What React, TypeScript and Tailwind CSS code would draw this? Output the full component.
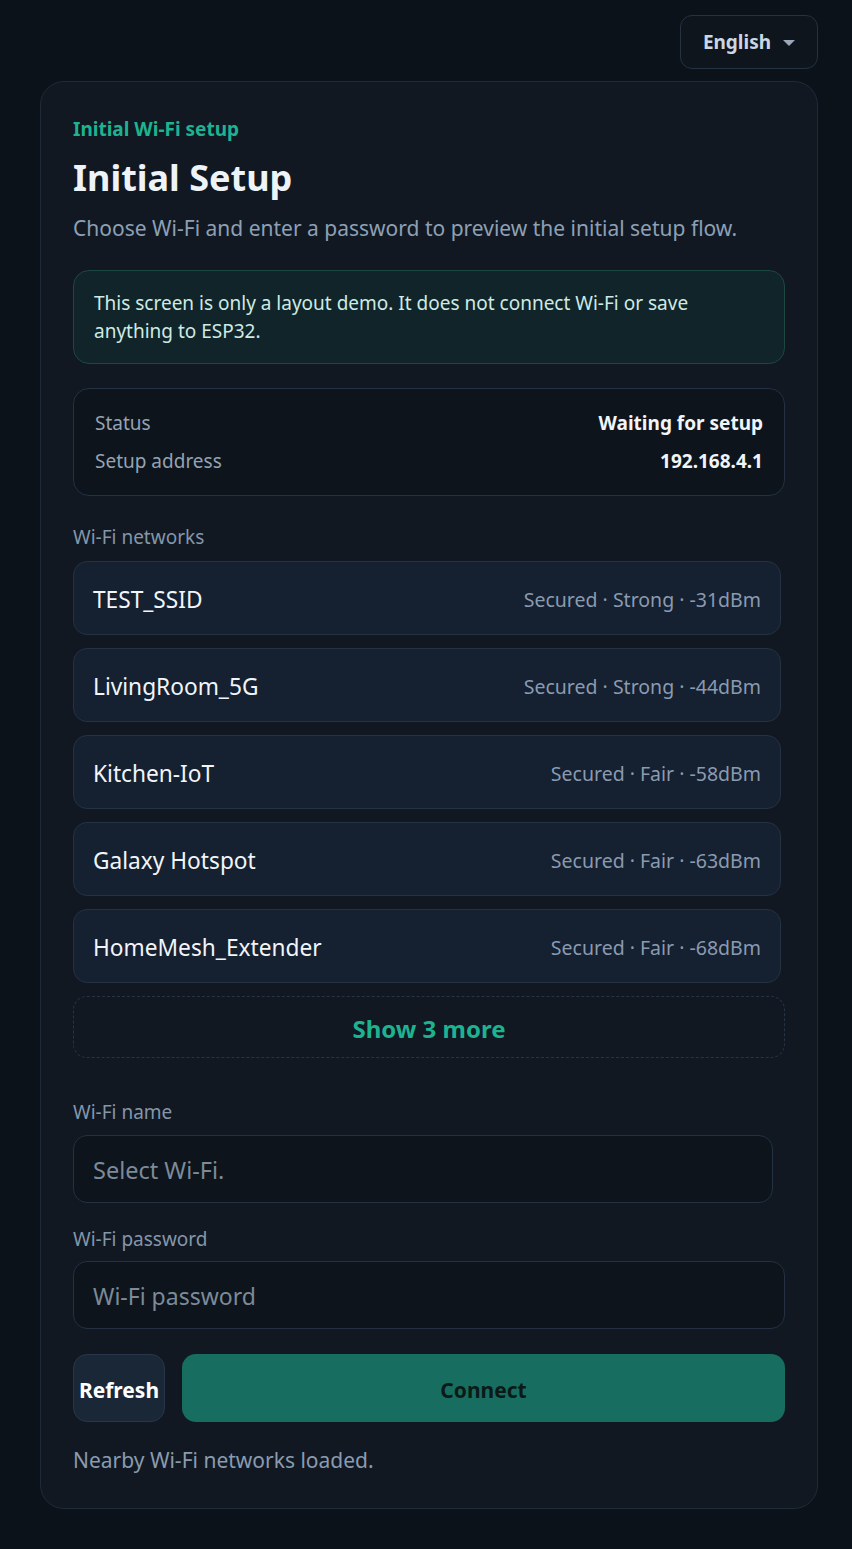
import { useState } from "react";

const networks = [
  { ssid: "TEST_SSID", meta: "Secured · Strong · -31dBm" },
  { ssid: "LivingRoom_5G", meta: "Secured · Strong · -44dBm" },
  { ssid: "Kitchen-IoT", meta: "Secured · Fair · -58dBm" },
  { ssid: "Galaxy Hotspot", meta: "Secured · Fair · -63dBm" },
  { ssid: "HomeMesh_Extender", meta: "Secured · Fair · -68dBm" },
];

export default function App() {
  const [ssid, setSsid] = useState("");
  const [password, setPassword] = useState("");

  return (
    <div
      className="min-h-screen bg-[#0c1219] pl-[40px] pr-[34px] pt-[15px] pb-[40px] text-white"
      style={{ fontFamily: '"Noto Sans", "Noto Sans CJK KR", sans-serif' }}
    >
      <div className="flex justify-end">
        <button className="flex h-[54px] w-[138px] items-center justify-center gap-3 rounded-[12px] border border-[#253241] bg-[#0e151d] text-[19px] font-bold text-[#cbd6e2]">
          English
          <span className="mt-[2px] h-0 w-0 border-x-[6px] border-t-[6px] border-x-transparent border-t-[#9aa8b7]" />
        </button>
      </div>

      <div className="mt-[12px] rounded-[24px] border border-[#1f2b38] bg-[#111822] px-[32px] pt-[33px] pb-[33px]">
        <p className="text-[19px] font-bold leading-[28px] text-[#1db391]">Initial Wi-Fi setup</p>
        <h1 className="mt-[12px] text-[36px] font-bold leading-[46px] text-[#eef3f8]">Initial Setup</h1>
        <p className="mt-[12px] text-[21px] leading-[30px] text-[#8da0b5]">
          Choose Wi-Fi and enter a password to preview the initial setup flow.
        </p>

        <div className="mt-[27px] rounded-[16px] border border-[#1d4842] bg-[#11242a] px-[20px] py-[18px] text-[19px] leading-[28px] text-[#cdebe4]">
          This screen is only a layout demo. It does not connect Wi-Fi or save anything to ESP32.
        </div>

        <div className="mt-[24px] flex flex-col gap-[10px] rounded-[16px] border border-[#233142] bg-[#0e141b] px-[21px] py-[20px] text-[19px] leading-[28px]">
          <div className="flex justify-between">
            <span className="text-[#94a3b5]">Status</span>
            <span className="font-bold text-[#f1f5f9]">Waiting for setup</span>
          </div>
          <div className="flex justify-between">
            <span className="text-[#94a3b5]">Setup address</span>
            <span className="font-bold text-[#f1f5f9]">192.168.4.1</span>
          </div>
        </div>

        <p className="mt-[27px] text-[19px] leading-[28px] text-[#8496aa]">Wi-Fi networks</p>
        <div className="mt-[10px] mr-[4px] flex flex-col gap-[13px]">
          {networks.map((n) => (
            <button
              key={n.ssid}
              onClick={() => setSsid(n.ssid)}
              className="flex h-[74px] items-center justify-between rounded-[14px] border border-[#243242] bg-[#152030] px-[19px] pt-[4px] text-left"
            >
              <span className="text-[22.7px] text-[#f1f5f9]">{n.ssid}</span>
              <span className="text-[19.5px] text-[#8a9bb0]">{n.meta}</span>
            </button>
          ))}
        </div>
        <button className="mt-[13px] flex h-[62px] w-full items-center justify-center rounded-[14px] border border-dashed border-[#263445] pt-[4px] text-[24px] font-bold text-[#1db391]">
          Show 3 more
        </button>

        <label className="mt-[40px] block text-[19px] leading-[28px] text-[#8496aa]">Wi-Fi name</label>
        <input
          value={ssid}
          onChange={(e) => setSsid(e.target.value)}
          placeholder="Select Wi-Fi."
          className="mt-[9px] h-[68px] w-[700px] rounded-[14px] border border-[#233142] bg-[#0e141b] px-[19px] pt-[2px] text-[23.5px] text-white outline-none placeholder:text-[#7c8a99]"
        />

        <label className="mt-[22px] block text-[19px] leading-[28px] text-[#8496aa]">Wi-Fi password</label>
        <input
          type="password"
          value={password}
          onChange={(e) => setPassword(e.target.value)}
          placeholder="Wi-Fi password"
          className="mt-[8px] h-[68px] w-full rounded-[14px] border border-[#233142] bg-[#0e141b] px-[19px] pt-[2px] text-[23px] text-white outline-none placeholder:text-[#7c8a99]"
        />

        <div className="mt-[25px] flex gap-[17px]">
          <button className="h-[68px] w-[92px] rounded-[14px] border border-[#27364a] bg-[#1a2736] pt-[5px] text-[21px] font-bold text-white">
            Refresh
          </button>
          <button className="h-[68px] flex-1 rounded-[14px] bg-[#176e60] pt-[5px] text-[21px] font-bold text-[#0b1a17]">
            Connect
          </button>
        </div>

        <p className="mt-[23px] text-[21px] leading-[30px] text-[#8a9bb0]">Nearby Wi-Fi networks loaded.</p>
      </div>
    </div>
  );
}
